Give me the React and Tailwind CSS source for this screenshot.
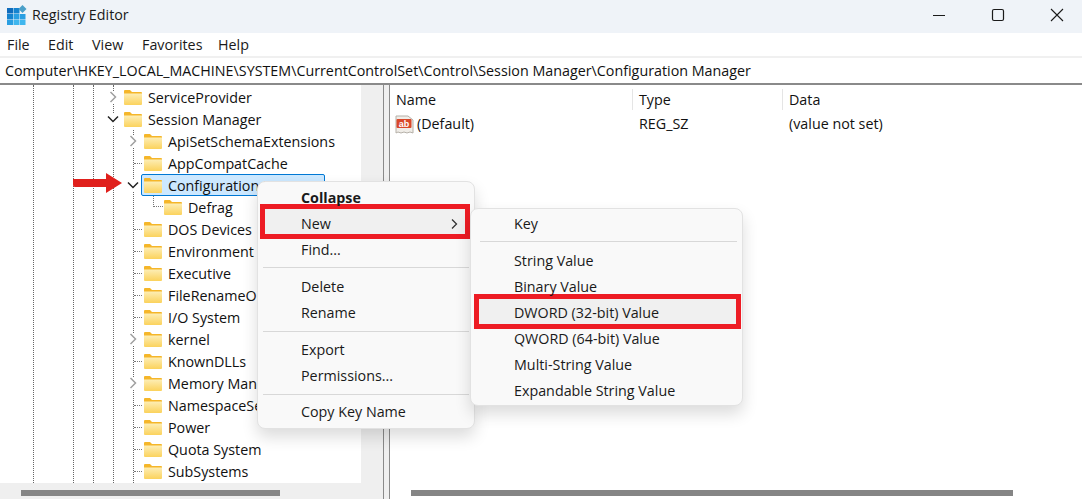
const FONT = "font-['Open_Sans','Noto_Sans',sans-serif]"

const TREE = [
  { label: 'ServiceProvider', level: 1, chevron: 'right' },
  { label: 'Session Manager', level: 1, chevron: 'down' },
  { label: 'ApiSetSchemaExtensions', level: 2, chevron: 'right' },
  { label: 'AppCompatCache', level: 2 },
  { label: 'Configuration Manager', level: 2, chevron: 'down', selected: true },
  { label: 'Defrag', level: 3 },
  { label: 'DOS Devices', level: 2 },
  { label: 'Environment', level: 2 },
  { label: 'Executive', level: 2 },
  { label: 'FileRenameOperations', level: 2 },
  { label: 'I/O System', level: 2 },
  { label: 'kernel', level: 2, chevron: 'right' },
  { label: 'KnownDLLs', level: 2 },
  { label: 'Memory Management', level: 2, chevron: 'right' },
  { label: 'NamespaceSeparation', level: 2 },
  { label: 'Power', level: 2 },
  { label: 'Quota System', level: 2 },
  { label: 'SubSystems', level: 2 },
]

function RegeditIcon() {
  return (
    <svg width="20" height="20" viewBox="0 0 20 20">
      <rect x="0" y="3" width="6" height="5.5" fill="#0f6cbd" />
      <rect x="6.5" y="3" width="6" height="5.5" fill="#1583cf" />
      <rect x="0" y="9" width="6" height="5.5" fill="#1583cf" />
      <rect x="6.5" y="9" width="6" height="5.5" fill="#2a9fe2" />
      <rect x="13" y="9" width="5.5" height="5.5" fill="#2a9fe2" />
      <rect x="0" y="15" width="6" height="5" fill="#2a9fe2" />
      <rect x="6.5" y="15" width="6" height="5" fill="#3fb6ee" />
      <rect x="13" y="15" width="5.5" height="5" fill="#3fb6ee" />
      <path d="M15.5 0l4 4-4 4-4-4z" fill="#4a9fc9" />
    </svg>
  )
}

function Folder() {
  return (
    <svg width="18" height="15" viewBox="0 0 18 15" className="shrink-0">
      <defs>
        <linearGradient id="folderBody" x1="0" y1="0" x2="0" y2="1">
          <stop offset="0" stopColor="#fdeeb5" />
          <stop offset="1" stopColor="#fbd25c" />
        </linearGradient>
      </defs>
      <path d="M0 1a1 1 0 0 1 1-1h5l2 2h9a1 1 0 0 1 1 1v2H0z" fill="#f5b629" />
      <path d="M0 3.5h18v10.5a1 1 0 0 1-1 1H1a1 1 0 0 1-1-1z" fill="url(#folderBody)" />
    </svg>
  )
}

function Chevron({ dir }) {
  return (
    <svg width="12" height="12" viewBox="0 0 12 12" fill="none" strokeWidth="1.5" className="bg-white">
      {dir === 'right'
        ? <path d="M3.5 1l5 5-5 5" stroke="#a0a0a0" />
        : <path d="M1 3.5l5 5 5-5" stroke="#222222" />}
    </svg>
  )
}

function TreeRow({ label, level, chevron, selected }) {
  const indent = { 1: 'pl-[107px]', 2: 'pl-[127px]', 3: 'pl-[147px]' }[level]
  return (
    <div className={`relative flex h-[22px] items-center ${indent}`}>
      <div className="relative z-10 flex w-[17px] shrink-0 items-center">
        {chevron && <Chevron dir={chevron} />}
        {!chevron && level === 2 && <div className="ml-[7px] w-2 border-t border-dotted border-[#777]" />}
        {!chevron && level === 3 && <div className="mb-[11px] ml-[6px] h-[11px] w-[10px] border-b border-l border-dotted border-[#777]" />}
      </div>
      <div className={`relative z-10 flex h-[22px] items-center gap-[6px] whitespace-nowrap text-[14.3px] text-[#111] ${selected ? 'ml-[-3px] w-[184px] rounded-[2px] border border-[#0078d4] bg-[#cce8ff] pl-[2px]' : ''}`}>
        <Folder />
        <span className="pt-[2px]">{label}</span>
      </div>
    </div>
  )
}

// mark draws the red annotation box around a highlighted item
function MenuItem({ children, bold, arrow, mark }) {
  return (
    <div className={`relative flex h-[26px] items-center justify-between pl-[43px] text-[14.3px] text-[#1a1a1a] ${bold ? 'font-bold' : ''}`}>
      {mark && <div className={`absolute -z-10 border-[5px] border-[#ed1c24] bg-[#f0f0f0] ${mark}`} />}
      <span>{children}</span>
      {arrow && (
        <svg width="10" height="12" viewBox="0 0 10 12" fill="none" stroke="#333" strokeWidth="1.3" className="mr-[15px]">
          <path d="M3 1.5l4.5 4.5L3 10.5" />
        </svg>
      )}
    </div>
  )
}

function Sep({ className }) {
  return <div className={`mx-[5px] h-px bg-[#d8d8d8] ${className}`} />
}

function Guide({ className }) {
  return <div className={`absolute bottom-0 border-l border-dotted border-[#666] ${className}`} />
}

export default function App() {
  return (
    <div className={`flex h-[499px] w-[1082px] flex-col overflow-hidden bg-white ${FONT}`}>
      {/* Title bar */}
      <div className="flex h-[33px] shrink-0 items-center bg-[#eff3f8] pb-[4px] pl-[7px]">
        <RegeditIcon />
        <span className="ml-[5px] text-[14.3px] text-[#1a1a1a]">Registry Editor</span>
        <div className="ml-auto flex items-center pr-[18px]">
          <svg width="14" height="14" viewBox="0 0 14 14" fill="none" stroke="#1a1a1a" className="mr-[45px]"><path d="M1 7.5h12" /></svg>
          <svg width="14" height="14" viewBox="0 0 14 14" fill="none" stroke="#1a1a1a" strokeWidth="1.2" className="mr-[45px]"><rect x="1.5" y="1.5" width="11" height="11" rx="1.5" /></svg>
          <svg width="14" height="14" viewBox="0 0 14 14" fill="none" stroke="#1a1a1a" strokeWidth="1.1"><path d="M1 1l12 12M13 1L1 13" /></svg>
        </div>
      </div>

      {/* Menu bar */}
      <div className="flex h-[23px] shrink-0 items-center pl-[7px] text-[14.3px] text-[#1a1a1a]">
        <span className="w-[41px]">File</span>
        <span className="w-[44px]">Edit</span>
        <span className="w-[50px]">View</span>
        <span className="w-[76px]">Favorites</span>
        <span>Help</span>
      </div>

      {/* Address bar */}
      <div className="flex h-[29px] shrink-0 items-center border-t-2 border-b-2 border-t-[#f0f0f0] border-b-[#8a8a8a] pl-[5px] text-[14.3px] text-[#111]">
        Computer\HKEY_LOCAL_MACHINE\SYSTEM\CurrentControlSet\Control\Session Manager\Configuration Manager
      </div>

      {/* Panes */}
      <div className="relative flex min-h-0 flex-1">
        <div className="flex w-[383px] shrink-0 flex-col bg-[#efefef]">
          <div className="relative h-[398px] w-[361px] overflow-hidden bg-white pt-[1px]">
            <Guide className="top-0 left-[33px]" />
            <Guide className="top-0 left-[73px]" />
            <Guide className="top-0 left-[93px]" />
            <Guide className="top-0 left-[113px]" />
            <Guide className="top-[45px] left-[133px]" />
            {TREE.map(row => <TreeRow key={row.label} {...row} />)}
          </div>
          <div className="flex flex-1 items-center pt-[4px] pl-[21px]">
            <div className="h-[6px] w-[259px] bg-[#858585]" />
          </div>
        </div>

        <div className="w-[7px] shrink-0 border-x border-[#8a8a8a] bg-[#efefef]" />

        <div className="flex min-w-0 flex-1 flex-col">
          <div className="h-[398px] pt-[1px] text-[14.3px] text-[#111]">
            <div className="flex h-[27px] items-center">
              <span className="w-[243px] border-r border-[#e5e5e5] pl-[6px]">Name</span>
              <span className="w-[150px] border-r border-[#e5e5e5] pl-[6px]">Type</span>
              <span className="pl-[6px]">Data</span>
            </div>
            <div className="flex h-[22px] items-center">
              <div className="flex w-[243px] items-center gap-[3px] pl-[5px]">
                <svg width="19" height="19" viewBox="0 0 19 19">
                  <path d="M1 1h12l5 4v13l-3-1-3 1-3-1-3 1-3-1-2 1z" fill="#f0ede8" stroke="#b5b0a8" />
                  <rect x="1.5" y="4" width="15" height="9" rx="1" fill="#d9482b" />
                  <text x="9" y="11.5" textAnchor="middle" fontSize="9" fontWeight="700" fill="#fff" fontFamily="Liberation Sans, sans-serif">ab</text>
                </svg>
                <span>(Default)</span>
              </div>
              <span className="w-[150px] pl-[6px]">REG_SZ</span>
              <span className="pl-[6px]">(value not set)</span>
            </div>
          </div>
          <div className="flex flex-1 items-center pt-[4px] pl-[21px]">
            <div className="h-[6px] w-[602px] bg-[#858585]" />
          </div>
        </div>
      </div>

      {/* Annotation arrow */}
      <svg width="50" height="22" viewBox="0 0 50 22" className="absolute top-[172px] left-[73px] z-20">
        <path d="M0 7h33V1l16 10-16 10v-6H2a2 2 0 0 1-2-2z" fill="#e0201c" />
      </svg>

      {/* Context menu */}
      <div className="absolute top-[181px] left-[257px] z-20 h-[248px] w-[218px] rounded-lg border border-[#e2e2e2] bg-[#f9f9f9] pt-[3px] shadow-[0_8px_16px_rgba(0,0,0,0.14)]">
        <MenuItem bold>Collapse</MenuItem>
        <MenuItem arrow mark="-top-[7px] right-[4px] -bottom-[2px] left-[2px]">New</MenuItem>
        <MenuItem>Find...</MenuItem>
        <Sep className="mt-[4px] mb-[6px]" />
        <MenuItem>Delete</MenuItem>
        <MenuItem>Rename</MenuItem>
        <Sep className="mt-[5px] mb-[5px]" />
        <MenuItem>Export</MenuItem>
        <MenuItem>Permissions...</MenuItem>
        <Sep className="mt-[5px] mb-[4px]" />
        <MenuItem>Copy Key Name</MenuItem>
      </div>

      {/* New submenu */}
      <div className="absolute top-[208px] left-[470px] z-30 h-[198px] w-[273px] rounded-lg border border-[#e2e2e2] bg-[#f9f9f9] pt-[2px] shadow-[0_8px_16px_rgba(0,0,0,0.14)]">
        <MenuItem>Key</MenuItem>
        <Sep className="mt-[4px] mb-[6px] ml-[9px]" />
        <MenuItem>String Value</MenuItem>
        <MenuItem>Binary Value</MenuItem>
        <MenuItem mark="-top-[6px] right-[1px] -bottom-[3px] left-[3px]">DWORD (32-bit) Value</MenuItem>
        <MenuItem>QWORD (64-bit) Value</MenuItem>
        <MenuItem>Multi-String Value</MenuItem>
        <MenuItem>Expandable String Value</MenuItem>
      </div>
    </div>
  )
}
